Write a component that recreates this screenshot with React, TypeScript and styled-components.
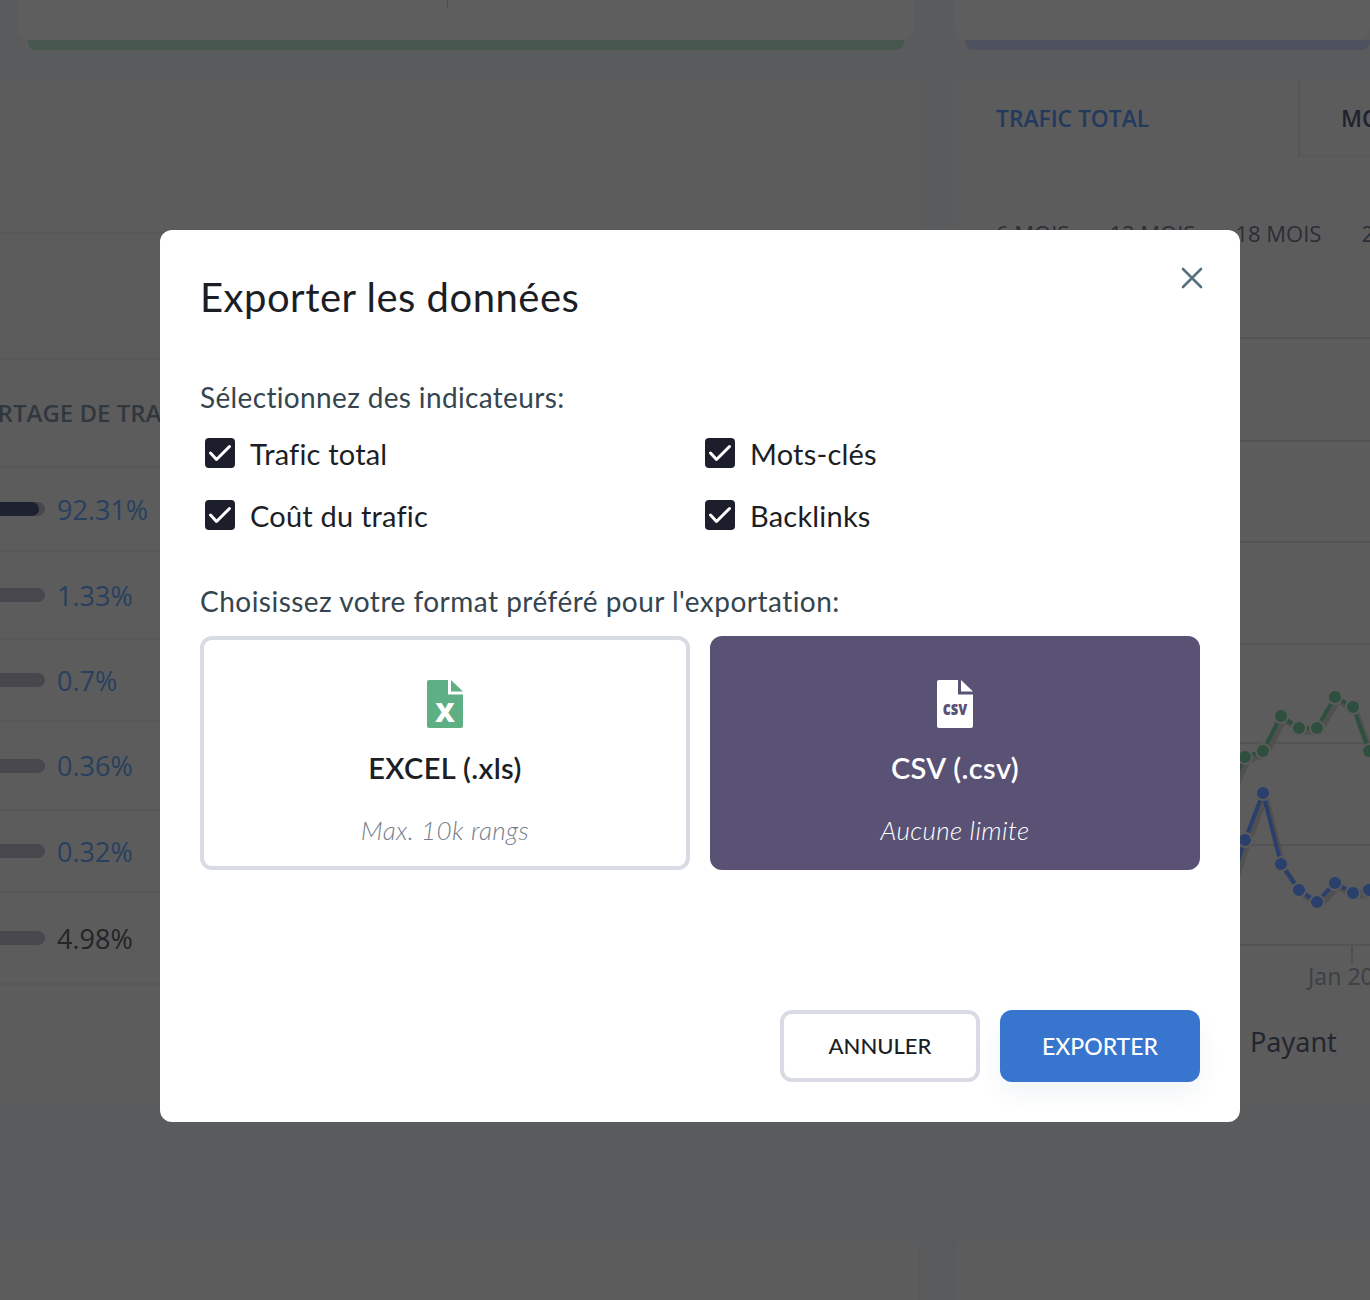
import React from "react";
import styled, { createGlobalStyle } from "styled-components";

const Global = createGlobalStyle`
  html, body { margin: 0; padding: 0; background: #5a5b5d; }
  body { font-family: Lato, "Noto Sans", sans-serif; font-variant-ligatures: none; }
  * { box-sizing: border-box; }
`;

const Page = styled.div`
  position: relative;
  width: 1370px;
  height: 1300px;
  overflow: hidden;
  background: #5a5b5d;
  font-family: Lato, "Noto Sans", sans-serif;
  font-variant-ligatures: none;
`;
const TopRow = styled.div`
  display: grid;
  grid-template-columns: 896px 1fr;
  gap: 41px;
  padding-left: 18px;
  height: 50px;
`;
const TopCard = styled.div`
  position: relative;
  display: flex;
  flex-direction: column;
`;
const TopCardBody = styled.div`
  height: 40px;
  background: #5e5e5e;
  border-radius: 0 0 12px 12px;
`;
const Tick = styled.div`
  position: absolute;
  left: 429px;
  top: 0;
  width: 1px;
  height: 8px;
  background: #4e4e4e;
`;
const StatusBar = styled.div<{ $color: string; $inset: string }>`
  height: 10px;
  margin: ${(p) => p.$inset};
  background: ${(p) => p.$color};
  border-radius: 0 0 8px 8px;
`;
const Columns = styled.div`
  display: grid;
  grid-template-columns: 918px 1fr;
  gap: 37px;
  margin-top: 30px;
  height: 1020px;
`;
const LeftCard = styled.section`
  display: flex;
  flex-direction: column;
  padding-top: 152px;
  background: #5c5c5c;
  overflow: hidden;
`;
const TableTop = styled.div`
  flex: none;
  height: 128px;
  border-top: 2px solid #585858;
  border-bottom: 3px solid #585858;
`;
const HeadCell = styled.div`
  flex: none;
  display: flex;
  align-items: center;
  height: 108px;
  border-bottom: 3px solid #585858;
`;
const HeadText = styled.div`
  margin-left: -33px;
  white-space: nowrap;
  font: 600 24px/30px "Open Sans", sans-serif;
  color: #30383e;
`;
const Row = styled.div<{ $h: number }>`
  flex: none;
  display: flex;
  align-items: center;
  gap: 12px;
  height: ${(p) => p.$h}px;
  border-bottom: 2px solid #585858;
`;
const Track = styled.div`
  width: 45px;
  height: 14px;
  border-radius: 0 7px 7px 0;
  background: #47474d;
  overflow: hidden;
`;
const Fill = styled.div`
  height: 100%;
  background: #1e2130;
  border-radius: 0 7px 7px 0;
`;
const Pct = styled.span<{ $dark?: boolean }>`
  font: 400 27px/1 "Open Sans", sans-serif;
  color: ${(p) => (p.$dark ? "#222428" : "#27405f")};
`;
const RightCard = styled.section`
  display: flex;
  flex-direction: column;
  background: #5c5c5c;
  overflow: hidden;
`;
const Tabs = styled.div`
  display: flex;
  height: 77px;
  flex: none;
`;
const Tab = styled.div<{ $w: number; $active?: boolean }>`
  flex: none;
  width: ${(p) => p.$w}px;
  padding: 24px 0 0 41px;
  border-right: ${(p) => (p.$active ? "2px solid #555" : "none")};
  border-bottom: ${(p) => (p.$active ? "none" : "3px solid #585a5c")};
  font: 600 22.8px/30px "Open Sans", sans-serif;
  white-space: nowrap;
  color: ${(p) => (p.$active ? "#213a5e" : "#20232e")};
`;
const Ranges = styled.div`
  display: flex;
  gap: 40px;
  padding: 60px 0 0 41px;
  height: 180px;
  flex: none;
  font: 400 22px/32px "Open Sans", sans-serif;
  color: #2b2e36;
  white-space: nowrap;
`;
const ChartSvg = styled.svg`
  display: block;
  flex: none;
  width: 415px;
  height: 661px;
  margin-bottom: -1px;
`;
const Legend = styled.div`
  padding: 0 0 0 295px;
  margin-top: 27px;
  font: 400 27px/36px "Noto Sans", sans-serif;
  color: #23262f;
`;
const BottomRow = styled.div`
  display: grid;
  grid-template-columns: 918px 1fr;
  gap: 37px;
  margin-top: 143px;
  height: 60px;
  background: #585a5c;
`;
const BottomCard = styled.div`
  background: #5c5c5c;
`;
const Overlay = styled.div`
  position: absolute;
  inset: 0;
  padding: 230px 0 0 160px;
`;
const Modal = styled.div`
  position: relative;
  width: 1080px;
  height: 892px;
  padding: 39px 40px 40px;
  background: #fff;
  border-radius: 12px;
  display: flex;
  flex-direction: column;
`;
const Close = styled.button`
  position: absolute;
  top: 33px;
  right: 33px;
  width: 30px;
  height: 30px;
  padding: 0;
  border: 0;
  background: none;
  color: #567080;
  display: flex;
  align-items: center;
  justify-content: center;
`;
const Title = styled.h2`
  margin: 0;
  font-size: 40px;
  line-height: 56px;
  font-weight: 400;
  letter-spacing: 0.5px;
  color: #1c1e26;
`;
const SectionLabel = styled.div<{ $top: number; $track: number }>`
  margin-top: ${(p) => p.$top}px;
  font-size: 28px;
  line-height: 36px;
  letter-spacing: ${(p) => p.$track}px;
  color: #34454f;
`;
const Checks = styled.div`
  display: grid;
  grid-template-columns: 500px 1fr;
  grid-auto-rows: 30px;
  row-gap: 32px;
  margin-top: 23px;
  padding-left: 5px;
`;
const Check = styled.label`
  display: flex;
  align-items: flex-start;
  gap: 15px;
  font-size: 29px;
  line-height: 31px;
  letter-spacing: 0.2px;
  color: #1c1e26;
`;
const Box = styled.span`
  flex: none;
  width: 30px;
  height: 30px;
  border-radius: 4px;
  background: #1c1e2b;
  display: flex;
  align-items: center;
  justify-content: center;
`;
const Formats = styled.div`
  display: grid;
  grid-template-columns: 490px 490px;
  gap: 20px;
  margin-top: 17px;
`;
const Format = styled.div<{ $selected?: boolean }>`
  height: 234px;
  border-radius: 12px;
  border: 4px solid ${(p) => (p.$selected ? "#5a5275" : "#d8dae4")};
  background: ${(p) => (p.$selected ? "#5a5275" : "#fff")};
  display: flex;
  flex-direction: column;
  align-items: center;
  padding-top: 40px;
`;
const FormatName = styled.div<{ $selected?: boolean }>`
  margin-top: 20px;
  font-size: 29px;
  line-height: 40px;
  font-weight: 600;
  letter-spacing: 0.4px;
  color: ${(p) => (p.$selected ? "#fff" : "#1c1e26")};
`;
const FormatNote = styled.div<{ $selected?: boolean }>`
  margin-top: 25px;
  font-size: 26px;
  line-height: 34px;
  font-style: italic;
  font-weight: 300;
  letter-spacing: 0.4px;
  color: ${(p) => (p.$selected ? "#fff" : "#76808e")};
`;
const Actions = styled.div`
  margin-top: auto;
  display: flex;
  justify-content: flex-end;
  gap: 20px;
`;
const Button = styled.button<{ $primary?: boolean }>`
  width: 200px;
  height: 72px;
  padding: ${(p) => (p.$primary ? "0" : "0 0 2px")};
  border-radius: 12px;
  border: ${(p) => (p.$primary ? "0" : "4px solid #d8dae4")};
  background: ${(p) => (p.$primary ? "#3775cf" : "#fff")};
  color: ${(p) => (p.$primary ? "#fff" : "#1c1e26")};
  box-shadow: ${(p) => (p.$primary ? "0 12px 24px rgba(40,60,100,0.06)" : "none")};
  font-family: Lato, "Noto Sans", sans-serif;
  font-size: ${(p) => (p.$primary ? 23 : 22)}px;
  font-weight: 500;
`;

const FileIcon = ({ fill, gap, label, size, baseline, fit }: { fill: string; gap: string; label: string; size: number; baseline: number; fit?: number }) => (
  <svg width="36" height="48" viewBox="0 0 36 48" aria-hidden="true">
    <path d="M2 0H21V14.5H36V46a2 2 0 0 1-2 2H2a2 2 0 0 1-2-2V2a2 2 0 0 1 2-2z" fill={fill} />
    <path d="M24 0L36 11.5H24z" fill={fill} />
    <text
      x="18"
      y={baseline}
      textAnchor="middle"
      fontFamily="'Noto Sans', sans-serif"
      fontWeight="900"
      fontSize={size}
      textLength={fit}
      lengthAdjust={fit ? "spacingAndGlyphs" : undefined}
      fill={gap}
    >
      {label}
    </text>
  </svg>
);

const CheckMark = () => (
  <svg width="22" height="18" viewBox="0 0 22 18" aria-hidden="true">
    <path d="M1.5 9L7.5 15.5L20.5 2.5" fill="none" stroke="#fff" strokeWidth="3" strokeLinecap="round" strokeLinejoin="round" />
  </svg>
);

const green: [number, number][] = [[1225, 800], [1245, 757], [1263, 751], [1281, 716], [1299, 728], [1317, 728], [1335, 697], [1353, 707], [1369, 751]];
const blue: [number, number][] = [[1225, 900], [1245, 840], [1263, 793], [1281, 864], [1299, 890], [1317, 902], [1335, 883], [1353, 893], [1369, 890]];
const OX = 955;
const OY = 338;
const pts = (a: [number, number][]) => a.map(([x, y]) => `${x - OX},${y - OY}`).join(" ");

const Series = ({ data, color }: { data: [number, number][]; color: string }) => (
  <g>
    <polyline points={pts(data)} fill="none" stroke="#505050" strokeWidth="5" transform="translate(3,4)" />
    <polyline points={pts(data)} fill="none" stroke={color} strokeWidth="4" />
    {data.map(([x, y]) => (
      <circle key={x} cx={x - OX} cy={y - OY} r="7" fill={color} stroke="#5c5c5c" strokeWidth="2" />
    ))}
  </g>
);

const rows: { h: number; v: string; w: number; dark?: boolean }[] = [
  { h: 84, v: "92.31%", w: 39 },
  { h: 88, v: "1.33%", w: 0 },
  { h: 82, v: "0.7%", w: 0 },
  { h: 89, v: "0.36%", w: 0 },
  { h: 82, v: "0.32%", w: 0 },
  { h: 92, v: "4.98%", w: 0, dark: true },
];

export default function App() {
  return (
    <Page>
      <Global />
      <TopRow>
        <TopCard>
          <Tick />
          <TopCardBody />
          <StatusBar $color="#47574d" $inset="0 10px" />
        </TopCard>
        <TopCard>
          <TopCardBody />
          <StatusBar $color="#4e5260" $inset="0 0 0 10px" />
        </TopCard>
      </TopRow>
      <Columns>
        <LeftCard>
          <TableTop />
          <HeadCell>
            <HeadText>PARTAGE DE TRAFIC</HeadText>
          </HeadCell>
          {rows.map((r) => (
            <Row key={r.v} $h={r.h}>
              <Track>{r.w > 0 && <Fill style={{ width: r.w }} />}</Track>
              <Pct $dark={r.dark}>{r.v}</Pct>
            </Row>
          ))}
        </LeftCard>
        <RightCard>
          <Tabs>
            <Tab $w={345} $active>TRAFIC TOTAL</Tab>
            <Tab $w={200}>MOTS-CLÉS</Tab>
          </Tabs>
          <Ranges>
            <span>6 MOIS</span>
            <span>12 MOIS</span>
            <span>18 MOIS</span>
            <span>24 MOIS</span>
          </Ranges>
          <ChartSvg viewBox="0 -1 415 661">
            {[0, 103, 204, 306, 405, 507, 607].map((y) => (
              <line key={y} x1="0" x2="415" y1={y} y2={y} stroke="#535353" strokeWidth="2" />
            ))}
            <line x1="397" x2="397" y1="608" y2="626" stroke="#4e5054" strokeWidth="2" />
            <Series data={green} color="#2f4f3e" />
            <Series data={blue} color="#2a3f6b" />
            <text x="353" y="647" fontFamily="'Noto Sans', sans-serif" fontSize="23" fill="#3c4146">Jan 2021</text>
          </ChartSvg>
          <Legend>Payant</Legend>
        </RightCard>
      </Columns>
      <BottomRow>
        <BottomCard />
        <BottomCard />
      </BottomRow>
      <Overlay>
        <Modal>
          <Close aria-label="Fermer">
            <svg width="24" height="24" viewBox="0 0 24 24" aria-hidden="true">
              <path d="M3 3L21 21M21 3L3 21" stroke="currentColor" strokeWidth="2.6" strokeLinecap="round" />
            </svg>
          </Close>
          <Title>Exporter les données</Title>
          <SectionLabel $top={54} $track={0.35}>Sélectionnez des indicateurs:</SectionLabel>
          <Checks>
            <Check><Box><CheckMark /></Box>Trafic total</Check>
            <Check><Box><CheckMark /></Box>Mots-clés</Check>
            <Check><Box><CheckMark /></Box>Coût du trafic</Check>
            <Check><Box><CheckMark /></Box>Backlinks</Check>
          </Checks>
          <SectionLabel $top={53} $track={0.48}>Choisissez votre format préféré pour l'exportation:</SectionLabel>
          <Formats>
            <Format>
              <FileIcon fill="#5eb084" gap="#fff" label="X" size={27} baseline={41.5} />
              <FormatName>EXCEL (.xls)</FormatName>
              <FormatNote>Max. 10k rangs</FormatNote>
            </Format>
            <Format $selected>
              <FileIcon fill="#fff" gap="#5a5275" label="csv" size={18.6} baseline={35} fit={24.6} />
              <FormatName $selected>CSV (.csv)</FormatName>
              <FormatNote $selected>Aucune limite</FormatNote>
            </Format>
          </Formats>
          <Actions>
            <Button>ANNULER</Button>
            <Button $primary>EXPORTER</Button>
          </Actions>
        </Modal>
      </Overlay>
    </Page>
  );
}
